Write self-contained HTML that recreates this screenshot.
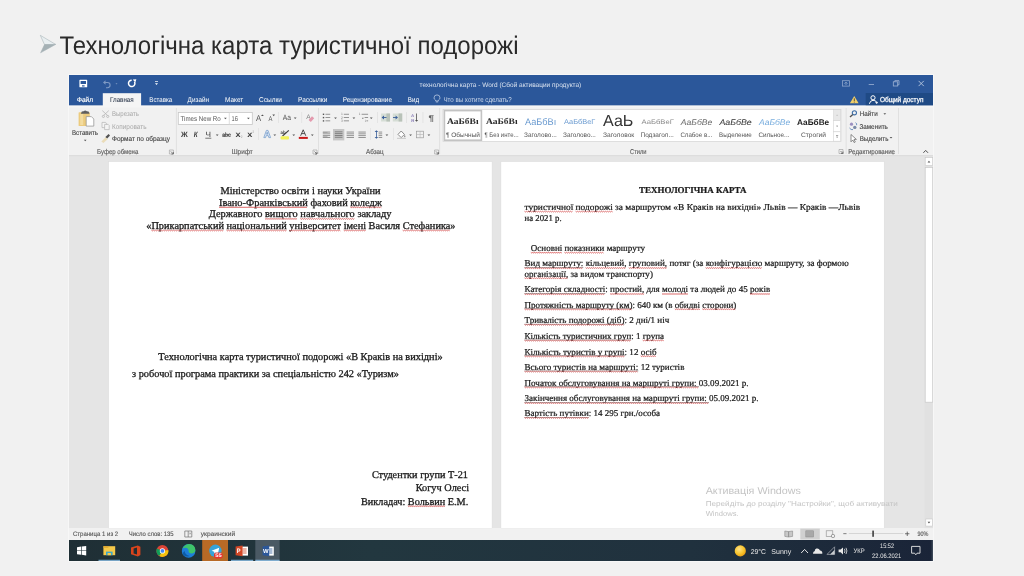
<!DOCTYPE html>
<html><head><meta charset="utf-8"><title>slide</title>
<style>html,body{margin:0;padding:0;width:1024px;height:576px;overflow:hidden;background:#efefef}svg{display:block;will-change:transform}</style>
</head><body><svg width="1024" height="576" viewBox="0 0 1024 576" text-rendering="geometricPrecision">
<rect x="0.00" y="0.00" width="1024.00" height="576.00" fill="#f1f1f1" />
<rect x="68.00" y="74.00" width="866.00" height="488.00" fill="#f7f7f7" />
<rect x="69.00" y="75.00" width="864.00" height="30.70" fill="#2b579a" />
<rect x="865.70" y="93.00" width="67.30" height="12.70" fill="#1f4a85" />
<rect x="69.00" y="105.70" width="864.00" height="49.50" fill="#f1f1f1" />
<rect x="69.00" y="105.70" width="864.00" height="1.80" fill="#f6f6f6" />
<rect x="102.80" y="93.20" width="38.30" height="13.80" fill="#f5f5f5" />
<rect x="69.00" y="155.20" width="864.00" height="373.10" fill="#e5e5e5" />
<rect x="69.00" y="155.20" width="864.00" height="1.00" fill="#dadada" />
<rect x="108.70" y="161.60" width="383.40" height="366.70" fill="#ffffff" stroke="#dcdcdc" stroke-width="0.5"/>
<rect x="500.90" y="161.60" width="383.30" height="366.70" fill="#ffffff" stroke="#dcdcdc" stroke-width="0.5"/>
<rect x="924.50" y="156.20" width="8.50" height="372.10" fill="#e1e1e1" />
<rect x="69.00" y="528.30" width="864.00" height="11.70" fill="#f1f1f1" />
<defs><linearGradient id="tb" x1="0" x2="1" y1="0" y2="0"><stop offset="0" stop-color="#1f2f35"/><stop offset="0.35" stop-color="#22373f"/><stop offset="0.72" stop-color="#20313e"/><stop offset="1" stop-color="#1a2438"/></linearGradient></defs>
<rect x="69.00" y="540.00" width="864.00" height="21.00" fill="url(#tb)" />
<path d="M40.3,35.3 L55.6,44.4 L44.5,44.6 Z" fill="#e9eff1" stroke="#a9b5b9" stroke-width="0.6"/><path d="M44.5,44.6 L55.6,44.4 L40.6,52.8 Z" fill="#a5b1b5" stroke="#a5b1b5" stroke-width="0.5"/>
<text x="59.40" y="53.90" font-size="25.50" fill="#2a2a2a" font-family="Liberation Sans" textLength="459.10" lengthAdjust="spacingAndGlyphs">Технологічна карта туристичної подорожі</text>
<text x="419.50" y="86.70" font-size="6.60" fill="#d9e2ef" font-family="Liberation Sans" textLength="161.75" lengthAdjust="spacingAndGlyphs">технологічна карта - Word (Сбой активации продукта)</text>
<text x="77.00" y="101.90" font-size="7.00" fill="#ffffff" font-family="Liberation Sans" textLength="16.00" lengthAdjust="spacingAndGlyphs" stroke="#ffffff" stroke-width="0.15">Файл</text>
<text x="110.00" y="101.90" font-size="7.00" fill="#3b4658" font-family="Liberation Sans" textLength="23.70" lengthAdjust="spacingAndGlyphs" stroke="#3b4658" stroke-width="0.1">Главная</text>
<text x="149.30" y="101.90" font-size="7.00" fill="#ffffff" font-family="Liberation Sans" textLength="22.89" lengthAdjust="spacingAndGlyphs">Вставка</text>
<text x="187.60" y="101.90" font-size="7.00" fill="#ffffff" font-family="Liberation Sans" textLength="21.40" lengthAdjust="spacingAndGlyphs">Дизайн</text>
<text x="225.10" y="101.90" font-size="7.00" fill="#ffffff" font-family="Liberation Sans" textLength="18.20" lengthAdjust="spacingAndGlyphs">Макет</text>
<text x="259.10" y="101.90" font-size="7.00" fill="#ffffff" font-family="Liberation Sans" textLength="22.90" lengthAdjust="spacingAndGlyphs">Ссылки</text>
<text x="298.00" y="101.90" font-size="7.00" fill="#ffffff" font-family="Liberation Sans" textLength="29.30" lengthAdjust="spacingAndGlyphs">Рассылки</text>
<text x="342.70" y="101.90" font-size="7.00" fill="#ffffff" font-family="Liberation Sans" textLength="49.30" lengthAdjust="spacingAndGlyphs">Рецензирование</text>
<text x="407.80" y="101.90" font-size="7.00" fill="#ffffff" font-family="Liberation Sans" textLength="11.20" lengthAdjust="spacingAndGlyphs">Вид</text>
<text x="443.40" y="101.90" font-size="7.00" fill="#c9d6ea" font-family="Liberation Sans" textLength="68.30" lengthAdjust="spacingAndGlyphs">Что вы хотите сделать?</text>
<text x="879.90" y="101.90" font-size="7.20" fill="#ffffff" font-family="Liberation Sans" textLength="43.50" lengthAdjust="spacingAndGlyphs" stroke="#ffffff" stroke-width="0.25">Общий доступ</text>
<text x="72.00" y="134.90" font-size="7.00" fill="#444444" font-family="Liberation Sans" textLength="26.00" lengthAdjust="spacingAndGlyphs" stroke="#444444" stroke-width="0.12">Вставить</text>
<text x="112.00" y="116.30" font-size="7.00" fill="#a8a8a8" font-family="Liberation Sans" textLength="26.80" lengthAdjust="spacingAndGlyphs">Вырезать</text>
<text x="112.00" y="128.60" font-size="7.00" fill="#a8a8a8" font-family="Liberation Sans" textLength="34.50" lengthAdjust="spacingAndGlyphs">Копировать</text>
<text x="112.00" y="141.00" font-size="7.00" fill="#444444" font-family="Liberation Sans" textLength="58.00" lengthAdjust="spacingAndGlyphs" stroke="#444444" stroke-width="0.12">Формат по образцу</text>
<text x="97.10" y="153.90" font-size="7.00" fill="#5e5e5e" font-family="Liberation Sans" textLength="41.19" lengthAdjust="spacingAndGlyphs" stroke="#5e5e5e" stroke-width="0.15">Буфер обмена</text>
<text x="231.70" y="153.90" font-size="7.00" fill="#5e5e5e" font-family="Liberation Sans" textLength="21.10" lengthAdjust="spacingAndGlyphs" stroke="#5e5e5e" stroke-width="0.15">Шрифт</text>
<text x="366.00" y="153.90" font-size="7.00" fill="#5e5e5e" font-family="Liberation Sans" textLength="17.75" lengthAdjust="spacingAndGlyphs" stroke="#5e5e5e" stroke-width="0.15">Абзац</text>
<text x="630.00" y="153.90" font-size="7.00" fill="#5e5e5e" font-family="Liberation Sans" textLength="16.50" lengthAdjust="spacingAndGlyphs" stroke="#5e5e5e" stroke-width="0.15">Стили</text>
<text x="848.30" y="153.90" font-size="7.00" fill="#5e5e5e" font-family="Liberation Sans" textLength="46.70" lengthAdjust="spacingAndGlyphs" stroke="#5e5e5e" stroke-width="0.15">Редактирование</text>
<text x="859.70" y="116.20" font-size="7.00" fill="#444444" font-family="Liberation Sans" textLength="18.00" lengthAdjust="spacingAndGlyphs" stroke="#444444" stroke-width="0.12">Найти</text>
<text x="859.40" y="128.80" font-size="7.00" fill="#444444" font-family="Liberation Sans" textLength="28.50" lengthAdjust="spacingAndGlyphs" stroke="#444444" stroke-width="0.12">Заменить</text>
<text x="859.70" y="141.00" font-size="7.00" fill="#444444" font-family="Liberation Sans" textLength="28.70" lengthAdjust="spacingAndGlyphs" stroke="#444444" stroke-width="0.12">Выделить</text>
<rect x="178.30" y="112.40" width="74.00" height="12.00" fill="#ffffff" stroke="#c6c6c6" stroke-width="0.8"/>
<line x1="229.3" y1="112.4" x2="229.3" y2="124.4" stroke="#d6d6d6" stroke-width="0.8"/>
<text x="180.50" y="120.50" font-size="7.00" fill="#555555" font-family="Liberation Sans" textLength="40.20" lengthAdjust="spacingAndGlyphs">Times New Ro</text>
<text x="231.60" y="120.50" font-size="7.00" fill="#555555" font-family="Liberation Sans" textLength="6.30" lengthAdjust="spacingAndGlyphs">16</text>
<text x="220.50" y="194.00" font-size="10.34" fill="#1a1a1a" font-family="Liberation Serif" textLength="160.00" lengthAdjust="spacingAndGlyphs" stroke="#1a1a1a" stroke-width="0.3">Міністерство освіти і науки України</text>
<text x="219.00" y="205.60" font-size="10.34" fill="#1a1a1a" font-family="Liberation Serif" textLength="162.94" lengthAdjust="spacingAndGlyphs" stroke="#1a1a1a" stroke-width="0.3">Івано-Франківський фаховий коледж</text>
<text x="208.75" y="217.20" font-size="10.34" fill="#1a1a1a" font-family="Liberation Serif" textLength="182.65" lengthAdjust="spacingAndGlyphs" stroke="#1a1a1a" stroke-width="0.3">Державного вищого навчального закладу</text>
<text x="146.25" y="228.80" font-size="10.34" fill="#1a1a1a" font-family="Liberation Serif" textLength="309.25" lengthAdjust="spacingAndGlyphs" stroke="#1a1a1a" stroke-width="0.3">«Прикарпатський національний університет імені Василя Стефаника»</text>
<text x="158.30" y="359.70" font-size="10.34" fill="#1a1a1a" font-family="Liberation Serif" textLength="284.40" lengthAdjust="spacingAndGlyphs" stroke="#1a1a1a" stroke-width="0.3">Технологічна карта туристичної подорожі «В Краків на вихідні»</text>
<text x="132.00" y="377.40" font-size="10.34" fill="#1a1a1a" font-family="Liberation Serif" textLength="267.00" lengthAdjust="spacingAndGlyphs" stroke="#1a1a1a" stroke-width="0.3">з робочої програма практики за спеціальністю 242 «Туризм»</text>
<text x="371.90" y="477.80" font-size="10.34" fill="#1a1a1a" font-family="Liberation Serif" textLength="96.00" lengthAdjust="spacingAndGlyphs" stroke="#1a1a1a" stroke-width="0.3">Студентки групи Т-21</text>
<text x="415.70" y="490.80" font-size="10.34" fill="#1a1a1a" font-family="Liberation Serif" textLength="53.30" lengthAdjust="spacingAndGlyphs" stroke="#1a1a1a" stroke-width="0.3">Когуч Олесі</text>
<text x="361.00" y="504.50" font-size="10.34" fill="#1a1a1a" font-family="Liberation Serif" textLength="107.30" lengthAdjust="spacingAndGlyphs" stroke="#1a1a1a" stroke-width="0.3">Викладач: Вольвин Е.М.</text>
<text x="639.00" y="193.00" font-size="9.00" fill="#1a1a1a" font-family="Liberation Serif" font-weight="bold" textLength="107.60" lengthAdjust="spacingAndGlyphs" stroke="#1a1a1a" stroke-width="0.22">ТЕХНОЛОГІЧНА КАРТА</text>
<text x="524.50" y="209.90" font-size="9.00" fill="#1a1a1a" font-family="Liberation Serif" textLength="335.80" lengthAdjust="spacingAndGlyphs" stroke="#1a1a1a" stroke-width="0.22">туристичної подорожі за маршрутом «В Краків на вихідні» Львів — Краків —Львів</text>
<text x="524.50" y="220.50" font-size="9.00" fill="#1a1a1a" font-family="Liberation Serif" textLength="37.10" lengthAdjust="spacingAndGlyphs" stroke="#1a1a1a" stroke-width="0.22">на 2021 р.</text>
<text x="530.80" y="251.00" font-size="9.00" fill="#1a1a1a" font-family="Liberation Serif" textLength="114.20" lengthAdjust="spacingAndGlyphs" stroke="#1a1a1a" stroke-width="0.22">Основні показники маршруту</text>
<text x="524.50" y="266.30" font-size="9.00" fill="#1a1a1a" font-family="Liberation Serif" textLength="324.20" lengthAdjust="spacingAndGlyphs" stroke="#1a1a1a" stroke-width="0.22">Вид маршруту: кільцевий, груповий, потяг (за конфігурацією маршруту, за формою</text>
<text x="524.50" y="276.50" font-size="9.00" fill="#1a1a1a" font-family="Liberation Serif" textLength="128.40" lengthAdjust="spacingAndGlyphs" stroke="#1a1a1a" stroke-width="0.22">організації, за видом транспорту)</text>
<text x="524.50" y="292.30" font-size="9.00" fill="#1a1a1a" font-family="Liberation Serif" textLength="245.70" lengthAdjust="spacingAndGlyphs" stroke="#1a1a1a" stroke-width="0.22">Категорія складності: простий, для молоді та людей до 45 років</text>
<text x="524.50" y="307.50" font-size="9.00" fill="#1a1a1a" font-family="Liberation Serif" textLength="211.80" lengthAdjust="spacingAndGlyphs" stroke="#1a1a1a" stroke-width="0.22">Протяжність маршруту (км): 640 км (в обидві сторони)</text>
<text x="524.50" y="322.90" font-size="9.00" fill="#1a1a1a" font-family="Liberation Serif" textLength="144.70" lengthAdjust="spacingAndGlyphs" stroke="#1a1a1a" stroke-width="0.22">Тривалість подорожі (діб): 2 дні/1 ніч</text>
<text x="524.50" y="338.70" font-size="9.00" fill="#1a1a1a" font-family="Liberation Serif" textLength="139.50" lengthAdjust="spacingAndGlyphs" stroke="#1a1a1a" stroke-width="0.22">Кількість туристичних груп: 1 група</text>
<text x="524.50" y="354.50" font-size="9.00" fill="#1a1a1a" font-family="Liberation Serif" textLength="132.10" lengthAdjust="spacingAndGlyphs" stroke="#1a1a1a" stroke-width="0.22">Кількість туристів у групі: 12 осіб</text>
<text x="524.50" y="369.70" font-size="9.00" fill="#1a1a1a" font-family="Liberation Serif" textLength="159.90" lengthAdjust="spacingAndGlyphs" stroke="#1a1a1a" stroke-width="0.22">Всього туристів на маршруті: 12 туристів</text>
<text x="524.50" y="385.50" font-size="9.00" fill="#1a1a1a" font-family="Liberation Serif" textLength="224.10" lengthAdjust="spacingAndGlyphs" stroke="#1a1a1a" stroke-width="0.22">Початок обслуговування на маршруті групи: 03.09.2021 р.</text>
<text x="524.50" y="401.20" font-size="9.00" fill="#1a1a1a" font-family="Liberation Serif" textLength="234.10" lengthAdjust="spacingAndGlyphs" stroke="#1a1a1a" stroke-width="0.22">Закінчення обслуговування на маршруті групи: 05.09.2021 р.</text>
<text x="524.50" y="416.00" font-size="9.00" fill="#1a1a1a" font-family="Liberation Serif" textLength="135.50" lengthAdjust="spacingAndGlyphs" stroke="#1a1a1a" stroke-width="0.22">Вартість путівки: 14 295 грн./особа</text>
<text x="705.70" y="494.40" font-size="10.00" fill="#c4c4c4" font-family="Liberation Sans" textLength="95.20" lengthAdjust="spacingAndGlyphs">Активація Windows</text>
<text x="705.70" y="506.10" font-size="7.20" fill="#c4c4c4" font-family="Liberation Sans" textLength="192.20" lengthAdjust="spacingAndGlyphs">Перейдіть до розділу &quot;Настройки&quot;, щоб активувати</text>
<text x="705.70" y="516.00" font-size="7.20" fill="#c4c4c4" font-family="Liberation Sans" textLength="32.90" lengthAdjust="spacingAndGlyphs">Windows.</text>
<text x="72.90" y="536.40" font-size="6.50" fill="#555555" font-family="Liberation Sans" textLength="45.30" lengthAdjust="spacingAndGlyphs" stroke="#555555" stroke-width="0.12">Страница 1 из 2</text>
<text x="128.80" y="536.40" font-size="6.50" fill="#555555" font-family="Liberation Sans" textLength="44.80" lengthAdjust="spacingAndGlyphs" stroke="#555555" stroke-width="0.12">Число слов: 135</text>
<text x="200.80" y="536.40" font-size="6.50" fill="#555555" font-family="Liberation Sans" textLength="34.30" lengthAdjust="spacingAndGlyphs" stroke="#555555" stroke-width="0.12">украинский</text>
<text x="917.50" y="536.40" font-size="6.50" fill="#555555" font-family="Liberation Sans" textLength="10.90" lengthAdjust="spacingAndGlyphs" stroke="#555555" stroke-width="0.12">90%</text>
<text x="750.80" y="553.80" font-size="7.00" fill="#e8e8e8" font-family="Liberation Sans" textLength="15.20" lengthAdjust="spacingAndGlyphs">29°C</text>
<text x="771.30" y="553.80" font-size="7.00" fill="#e8e8e8" font-family="Liberation Sans" textLength="19.90" lengthAdjust="spacingAndGlyphs">Sunny</text>
<text x="853.50" y="552.90" font-size="6.50" fill="#e8e8e8" font-family="Liberation Sans" textLength="11.20" lengthAdjust="spacingAndGlyphs">УКР</text>
<text x="880.10" y="548.30" font-size="6.50" fill="#e8e8e8" font-family="Liberation Sans" textLength="13.90" lengthAdjust="spacingAndGlyphs">15:52</text>
<text x="872.10" y="557.70" font-size="6.50" fill="#e8e8e8" font-family="Liberation Sans" textLength="29.10" lengthAdjust="spacingAndGlyphs">22.06.2021</text>
<rect x="79.4" y="79.8" width="7.8" height="7.5" rx="0.6" fill="#ffffff"/><rect x="80.6" y="81" width="5.4" height="3.0" fill="#2b579a"/><rect x="82" y="85.3" width="2.6" height="1.2" fill="#2b579a"/>
<path d="M104,82.5 L107.5,82.5 A2.6,2.6 0 0 1 107.5,87.7 L106,87.7" fill="none" stroke="#7f9ac4" stroke-width="1.1"/><path d="M103,82.5 L105.5,80.2 L105.5,84.8 Z" fill="#7f9ac4"/>
<path d="M115.5,83.3 L117.5,83.3 L116.5,84.5 Z" fill="#7f9ac4"/>
<path d="M131.7,80.2 A3.2,3.2 0 1 0 134.47,81.8" fill="none" stroke="#ffffff" stroke-width="1.5"/><path d="M132.8,79.4 L136.4,79.2 L135.3,82.6 Z" fill="#ffffff"/>
<rect x="155" y="81.2" width="3" height="0.7" fill="#ffffff"/><path d="M155,83.2 L158,83.2 L156.5,85 Z" fill="#ffffff"/>
<rect x="842.6" y="80.7" width="6.8" height="5.4" fill="none" stroke="#8ea6cc" stroke-width="0.8"/><path d="M844.4,83.6 L846,82.2 L847.6,83.6 M846,82.4 L846,85" fill="none" stroke="#8ea6cc" stroke-width="0.8"/>
<rect x="868.7" y="84" width="5.3" height="0.8" fill="#9db2d4"/>
<rect x="893.3" y="81.8" width="4.4" height="4.2" fill="none" stroke="#9db2d4" stroke-width="0.8"/><path d="M894.8,81.8 L894.8,80.6 L899,80.6 L899,84.8 L897.7,84.8" fill="none" stroke="#9db2d4" stroke-width="0.8"/>
<path d="M918.6,80.9 L923.8,86.1 M923.8,80.9 L918.6,86.1" stroke="#b9c8e0" stroke-width="0.9"/>
<path d="M854.25,96 L858.6,103.3 L849.9,103.3 Z" fill="#f0cf6a"/><rect x="853.85" y="98.3" width="0.8" height="2.8" fill="#333"/><rect x="853.85" y="101.7" width="0.8" height="0.8" fill="#333"/>
<circle cx="873" cy="97.8" r="2.1" fill="none" stroke="#ffffff" stroke-width="1"/><path d="M869.4,103.8 Q870,100.6 873,100.3 Q875.2,100.4 876.2,101.6" fill="none" stroke="#ffffff" stroke-width="1"/><path d="M875.3,102.6 L878,102.6 M876.65,101.3 L876.65,104" stroke="#ffffff" stroke-width="0.8"/>
<path d="M435.6,101 L435.6,100.2 Q433.8,99 434,97.9 A3,3 0 0 1 440,97.9 Q440.2,99 438.4,100.2 L438.4,101 Z" fill="none" stroke="#c9d6ea" stroke-width="0.7"/><rect x="435.8" y="101.6" width="2.4" height="0.7" fill="#c9d6ea"/>
<rect x="78.6" y="112.3" width="11.2" height="13.8" rx="0.6" fill="#eccb7e"/><rect x="80.2" y="114" width="3" height="11" fill="#f3dca0"/>
<path d="M80.9,113.8 L81.8,111.6 L83.6,111.2 Q85.2,109.6 86.8,111.2 L88.6,111.6 L89.5,113.8 Z" fill="#5f5f5f"/>
<path d="M86.2,116.6 L91.4,116.6 L93.8,119 L93.8,126.1 L86.2,126.1 Z" fill="#ffffff" stroke="#8c8c8c" stroke-width="0.7"/>
<path d="M83.9,139.8 L86.5,139.8 L85.2,141.2 Z" fill="#505050"/>
<g fill="none" stroke="#b5b5b5" stroke-width="0.8"><path d="M102.3,110.6 L107.6,115.6 M108.8,110.6 L103.5,115.6"/><circle cx="103.4" cy="116.4" r="1.1"/><circle cx="107.7" cy="116.4" r="1.1"/></g>
<g fill="#f4f4f4" stroke="#b5b5b5" stroke-width="0.7"><path d="M102,122.4 L105.6,122.4 L106.4,123.2 L106.4,127.6 L102,127.6 Z"/><path d="M104.6,124.4 L108.2,124.4 L109.2,125.4 L109.2,129.6 L104.6,129.6 Z"/></g>
<path d="M101.4,141.4 L105.6,137.2 L107.6,139.2 L103.4,143 Z" fill="#eadcb8"/><path d="M105.4,137 L108.6,134 L110,135.4 L107.2,138.6 Z" fill="#505050"/>
<path d="M169.4,150 L173.4,150 L173.4,154 L169.4,154 Z" fill="none" stroke="#9a9a9a" stroke-width="0.6"/><path d="M170.9,151.5 L173.4,154 L173.4,152 M173.4,154 L171.4,154" fill="none" stroke="#666" stroke-width="0.8"/>
<path d="M313,150 L317,150 L317,154 L313,154 Z" fill="none" stroke="#9a9a9a" stroke-width="0.6"/><path d="M314.5,151.5 L317,154 L317,152 M317,154 L315,154" fill="none" stroke="#666" stroke-width="0.8"/>
<path d="M434.6,150 L438.6,150 L438.6,154 L434.6,154 Z" fill="none" stroke="#9a9a9a" stroke-width="0.6"/><path d="M436.1,151.5 L438.6,154 L438.6,152 M438.6,154 L436.6,154" fill="none" stroke="#666" stroke-width="0.8"/>
<path d="M839,149.5 L843,149.5 L843,153.5 L839,153.5 Z" fill="none" stroke="#9a9a9a" stroke-width="0.6"/><path d="M840.5,151.0 L843,153.5 L843,151.5 M843,153.5 L841,153.5" fill="none" stroke="#666" stroke-width="0.8"/>
<rect x="175.9" y="108" width="0.8" height="46" fill="#dcdcdc"/>
<rect x="318.1" y="108" width="0.8" height="46" fill="#dcdcdc"/>
<rect x="439.3" y="108" width="0.8" height="46" fill="#dcdcdc"/>
<rect x="845.7" y="108" width="0.8" height="46" fill="#dcdcdc"/>
<rect x="898" y="108" width="0.8" height="46" fill="#dcdcdc"/>
<path d="M224.03,117.67 L226.78,117.67 L225.40,119.17 Z" fill="#555555"/>
<path d="M247.03,117.67 L249.78,117.67 L248.40,119.17 Z" fill="#555555"/>
<text x="255.90" y="120.80" font-size="8.50" fill="#505050" font-family="Liberation Sans" textLength="5.10" lengthAdjust="spacingAndGlyphs">A</text>
<path d="M261,116 L262.4,114.4 L263.8,116 Z" fill="#505050"/>
<text x="268.40" y="120.80" font-size="7.00" fill="#505050" font-family="Liberation Sans" textLength="3.90" lengthAdjust="spacingAndGlyphs">A</text>
<path d="M272.4,114.6 L275,114.6 L273.7,116.2 Z" fill="#505050"/>
<rect x="278.3" y="112" width="0.7" height="11" fill="#dedede"/>
<text x="282.80" y="120.30" font-size="7.80" fill="#505050" font-family="Liberation Sans" textLength="8.19" lengthAdjust="spacingAndGlyphs">Aa</text>
<path d="M293.82,117.38 L296.57,117.38 L295.20,118.88 Z" fill="#555555"/>
<rect x="301.4" y="112" width="0.7" height="11" fill="#dedede"/>
<text x="306.20" y="118.60" font-size="6.50" fill="#888888" font-family="Liberation Sans" textLength="4.40" lengthAdjust="spacingAndGlyphs">A</text>
<path d="M308.6,120 L312,116.2 L314.2,118.2 L310.8,122 Z" fill="#e49aae"/>
<text x="181.12" y="136.90" font-size="7.80" fill="#404040" font-family="Liberation Sans" font-weight="bold" textLength="6.74" lengthAdjust="spacingAndGlyphs">Ж</text>
<text x="193.75" y="136.90" font-size="7.80" fill="#404040" font-family="Liberation Sans" font-weight="bold" font-style="italic" textLength="3.89" lengthAdjust="spacingAndGlyphs">К</text>
<text x="205.50" y="136.90" font-size="7.80" fill="#404040" font-family="Liberation Sans" textLength="5.50" lengthAdjust="spacingAndGlyphs">Ч</text>
<rect x="205.3" y="137.8" width="6" height="0.7" fill="#404040"/>
<path d="M215.82,134.38 L218.57,134.38 L217.20,135.88 Z" fill="#555555"/>
<text x="222.30" y="136.90" font-size="6.50" fill="#404040" font-family="Liberation Sans" font-weight="bold" textLength="8.60" lengthAdjust="spacingAndGlyphs">abc</text>
<rect x="222.2" y="134.6" width="8.8" height="0.6" fill="#404040"/>
<text x="235.50" y="136.90" font-size="8.00" fill="#404040" font-family="Liberation Sans" font-weight="bold" textLength="5.10" lengthAdjust="spacingAndGlyphs">x</text>
<text x="241.00" y="138.00" font-size="3.50" fill="#888" font-family="Liberation Sans" textLength="1.40" lengthAdjust="spacingAndGlyphs">2</text>
<text x="247.30" y="136.90" font-size="8.00" fill="#404040" font-family="Liberation Sans" font-weight="bold" textLength="5.10" lengthAdjust="spacingAndGlyphs">x</text>
<text x="252.60" y="132.50" font-size="3.50" fill="#888" font-family="Liberation Sans" textLength="1.40" lengthAdjust="spacingAndGlyphs">2</text>
<rect x="258.3" y="128" width="0.7" height="12" fill="#e0e0e0"/>
<path d="M263.8,137.6 L266.4,130.4 L268,130.4 L270.6,137.6 L268.8,137.6 L268.2,135.6 L266.2,135.6 L265.6,137.6 Z M266.6,134.2 L267.8,134.2 L267.2,132.2 Z" fill="#dbe6f3" stroke="#6d97c9" stroke-width="0.7"/>
<path d="M273.43,134.38 L276.18,134.38 L274.80,135.88 Z" fill="#555555"/>
<text x="280.50" y="133.80" font-size="4.80" fill="#404040" font-family="Liberation Sans" font-weight="bold" textLength="5.00" lengthAdjust="spacingAndGlyphs">ab</text>
<path d="M282.5,136 L288.8,130.4" stroke="#404040" stroke-width="1.2"/>
<rect x="280.6" y="136.2" width="8.4" height="3.2" rx="1" fill="#f2f25a"/>
<path d="M292.38,134.38 L295.12,134.38 L293.75,135.88 Z" fill="#555555"/>
<path d="M300.6,135.8 L303.2,129.8 L305.8,135.8 M301.6,133.6 L304.8,133.6" fill="none" stroke="#404040" stroke-width="0.9"/>
<rect x="298.8" y="136.9" width="9" height="2" fill="#c81a1a"/>
<path d="M310.93,134.38 L313.68,134.38 L312.30,135.88 Z" fill="#555555"/>
<rect x="322.8" y="113.60000000000001" width="1.4" height="1.4" fill="#555"/>
<rect x="322.8" y="116.9" width="1.4" height="1.4" fill="#555"/>
<rect x="322.8" y="120.2" width="1.4" height="1.4" fill="#555"/>
<rect x="325.5" y="113.8" width="4.70" height="0.9" fill="#8a8a8a"/>
<rect x="325.5" y="117.1" width="4.70" height="0.9" fill="#8a8a8a"/>
<rect x="325.5" y="120.4" width="4.70" height="0.9" fill="#8a8a8a"/>
<path d="M334.12,117.38 L336.88,117.38 L335.50,118.88 Z" fill="#555555"/>
<text x="341.20" y="115.40" font-size="3.40" fill="#555" font-family="Liberation Sans" textLength="1.40" lengthAdjust="spacingAndGlyphs">1</text>
<text x="341.20" y="118.70" font-size="3.40" fill="#555" font-family="Liberation Sans" textLength="1.40" lengthAdjust="spacingAndGlyphs">2</text>
<text x="341.20" y="122.00" font-size="3.40" fill="#555" font-family="Liberation Sans" textLength="1.40" lengthAdjust="spacingAndGlyphs">3</text>
<rect x="343.8" y="113.8" width="5.20" height="0.9" fill="#8a8a8a"/>
<rect x="343.8" y="117.1" width="5.20" height="0.9" fill="#8a8a8a"/>
<rect x="343.8" y="120.4" width="5.20" height="0.9" fill="#8a8a8a"/>
<path d="M352.52,117.38 L355.27,117.38 L353.90,118.88 Z" fill="#555555"/>
<text x="359.10" y="115.40" font-size="3.40" fill="#555" font-family="Liberation Sans" textLength="1.30" lengthAdjust="spacingAndGlyphs">1</text>
<rect x="361.6" y="113.8" width="6.50" height="0.9" fill="#8a8a8a"/>
<text x="362.00" y="118.70" font-size="3.40" fill="#555" font-family="Liberation Sans" textLength="1.40" lengthAdjust="spacingAndGlyphs">a</text>
<rect x="364.6" y="117.1" width="3.50" height="0.9" fill="#8a8a8a"/>
<text x="364.80" y="122.00" font-size="3.40" fill="#555" font-family="Liberation Sans" textLength="0.80" lengthAdjust="spacingAndGlyphs">i</text>
<rect x="366.4" y="120.4" width="1.70" height="0.9" fill="#8a8a8a"/>
<path d="M369.88,117.38 L372.62,117.38 L371.25,118.88 Z" fill="#555555"/>
<rect x="377.2" y="112" width="0.7" height="11" fill="#dedede"/>
<rect x="381.1" y="113.5" width="9" height="8" fill="#d5ddd5"/><rect x="386.4" y="113.5" width="3.6" height="8" fill="#b8c2b8"/>
<path d="M381.6,117.5 L384,115.6 L384,119.4 Z" fill="#3a5f9a"/><rect x="383.5" y="117.1" width="3" height="0.9" fill="#3a5f9a"/>
<rect x="392.8" y="113.5" width="9.4" height="8" fill="#d5ddd5"/><rect x="398.6" y="113.5" width="3.6" height="8" fill="#b8c2b8"/>
<path d="M398,117.5 L395.6,115.6 L395.6,119.4 Z" fill="#3a5f9a"/><rect x="393" y="117.1" width="3" height="0.9" fill="#3a5f9a"/>
<rect x="406.2" y="112" width="0.7" height="11" fill="#dedede"/>
<text x="411.10" y="117.00" font-size="4.20" fill="#8a7fb8" font-family="Liberation Sans" font-weight="bold" textLength="3.20" lengthAdjust="spacingAndGlyphs">A</text>
<text x="411.10" y="121.50" font-size="4.20" fill="#8a7fb8" font-family="Liberation Sans" font-weight="bold" textLength="3.20" lengthAdjust="spacingAndGlyphs">Я</text>
<rect x="416.2" y="113.5" width="0.8" height="7" fill="#505050"/><path d="M415,120 L418.2,120 L416.6,121.8 Z" fill="#505050"/>
<rect x="422.6" y="112" width="0.7" height="11" fill="#dedede"/>
<text x="428.50" y="121.00" font-size="8.50" fill="#606060" font-family="Liberation Sans" font-weight="bold" textLength="5.60" lengthAdjust="spacingAndGlyphs">¶</text>
<rect x="322.8" y="131.6" width="7.40" height="0.9" fill="#8a8a8a"/>
<rect x="322.8" y="133.4" width="7.40" height="0.9" fill="#8a8a8a"/>
<rect x="322.8" y="135.2" width="7.40" height="0.9" fill="#8a8a8a"/>
<rect x="322.8" y="137" width="7.40" height="0.9" fill="#8a8a8a"/>
<rect x="322.8" y="132.5" width="4.70" height="0.5" fill="#8a8a8a"/>
<rect x="322.8" y="136.1" width="4.70" height="0.5" fill="#8a8a8a"/>
<rect x="333.00" y="129.00" width="11.30" height="11.40" fill="#c6c6c6" />
<rect x="334.8" y="131.4" width="7.70" height="0.9" fill="#7a7a7a"/>
<rect x="334.8" y="133.2" width="7.70" height="0.9" fill="#7a7a7a"/>
<rect x="334.8" y="135" width="7.70" height="0.9" fill="#7a7a7a"/>
<rect x="334.8" y="136.8" width="7.70" height="0.9" fill="#7a7a7a"/>
<rect x="346.6" y="131.6" width="7.40" height="0.9" fill="#8a8a8a"/>
<rect x="346.6" y="133.4" width="7.40" height="0.9" fill="#8a8a8a"/>
<rect x="346.6" y="135.2" width="7.40" height="0.9" fill="#8a8a8a"/>
<rect x="346.6" y="137" width="7.40" height="0.9" fill="#8a8a8a"/>
<rect x="358.4" y="131.6" width="7.40" height="0.9" fill="#8a8a8a"/>
<rect x="358.4" y="133.4" width="7.40" height="0.9" fill="#8a8a8a"/>
<rect x="358.4" y="135.2" width="7.40" height="0.9" fill="#8a8a8a"/>
<rect x="358.4" y="137" width="7.40" height="0.9" fill="#8a8a8a"/>
<rect x="370.3" y="128" width="0.7" height="12" fill="#e0e0e0"/>
<path d="M376.4,130.2 L378.2,132 L374.6,132 Z M376.4,138.8 L378.2,137 L374.6,137 Z" fill="#3a5f9a"/><rect x="376" y="131.5" width="0.8" height="6" fill="#3a5f9a"/>
<rect x="378.6" y="131.6" width="3.60" height="0.9" fill="#8a8a8a"/>
<rect x="378.6" y="133.4" width="3.60" height="0.9" fill="#8a8a8a"/>
<rect x="378.6" y="135.2" width="3.60" height="0.9" fill="#8a8a8a"/>
<rect x="378.6" y="137" width="3.60" height="0.9" fill="#8a8a8a"/>
<path d="M385.52,134.38 L388.27,134.38 L386.90,135.88 Z" fill="#555555"/>
<rect x="393.2" y="128" width="0.7" height="12" fill="#e0e0e0"/>
<path d="M398,134.4 L401.2,131 L404.4,134.4 L401.2,137.6 Z" fill="#ffffff" stroke="#707070" stroke-width="0.8"/><path d="M404.8,134.8 Q406,136.8 404.8,137.6 Q403.6,136.8 404.8,134.8 Z" fill="#707070"/>
<rect x="397" y="137.8" width="9" height="1.2" fill="#cfcfcf"/>
<path d="M409.23,134.38 L411.98,134.38 L410.60,135.88 Z" fill="#555555"/>
<rect x="416.6" y="131.2" width="7" height="6.6" fill="none" stroke="#9a9a9a" stroke-width="0.7"/><path d="M420.1,131.2 L420.1,137.8 M416.6,134.5 L423.6,134.5" stroke="#b5b5b5" stroke-width="0.6"/>
<path d="M427.52,134.38 L430.27,134.38 L428.90,135.88 Z" fill="#555555"/>
<rect x="443.00" y="109.40" width="398.00" height="32.00" fill="#ffffff" stroke="#d4d4d4" stroke-width="0.7"/>
<rect x="444.40" y="110.60" width="37.00" height="29.60" fill="#ffffff" stroke="#c3c3c3" stroke-width="1.6"/>
<text x="447.00" y="123.90" font-size="8.60" fill="#2a2a2a" font-family="Liberation Serif" font-weight="bold" textLength="31.60" lengthAdjust="spacingAndGlyphs">АаБбВı</text>
<text x="445.90" y="136.80" font-size="6.50" fill="#555" font-family="Liberation Sans" textLength="34.10" lengthAdjust="spacingAndGlyphs">¶ Обычный</text>
<text x="485.90" y="123.90" font-size="8.60" fill="#2a2a2a" font-family="Liberation Serif" font-weight="bold" textLength="31.70" lengthAdjust="spacingAndGlyphs">АаБбВı</text>
<text x="484.40" y="136.80" font-size="6.50" fill="#555" font-family="Liberation Sans" textLength="34.20" lengthAdjust="spacingAndGlyphs">¶ Без инте...</text>
<text x="525.00" y="125.20" font-size="9.60" fill="#6b9bd0" font-family="Liberation Sans" textLength="31.20" lengthAdjust="spacingAndGlyphs">АаБбВı</text>
<text x="524.00" y="136.80" font-size="6.50" fill="#555" font-family="Liberation Sans" textLength="32.80" lengthAdjust="spacingAndGlyphs">Заголово...</text>
<text x="564.00" y="124.10" font-size="7.00" fill="#6b9bd0" font-family="Liberation Sans" textLength="31.30" lengthAdjust="spacingAndGlyphs">АаБбВеГ</text>
<text x="563.00" y="136.80" font-size="6.50" fill="#555" font-family="Liberation Sans" textLength="32.90" lengthAdjust="spacingAndGlyphs">Заголово...</text>
<text x="603.00" y="125.50" font-size="16.00" fill="#333333" font-family="Liberation Sans" textLength="30.39" lengthAdjust="spacingAndGlyphs">АаЬ</text>
<text x="603.00" y="136.80" font-size="6.50" fill="#555" font-family="Liberation Sans" textLength="31.26" lengthAdjust="spacingAndGlyphs">Заголовок</text>
<text x="641.50" y="124.10" font-size="6.60" fill="#8a8a8a" font-family="Liberation Sans" textLength="32.30" lengthAdjust="spacingAndGlyphs">АаБбВеГ</text>
<text x="640.50" y="136.80" font-size="6.50" fill="#555" font-family="Liberation Sans" textLength="33.30" lengthAdjust="spacingAndGlyphs">Подзагол...</text>
<text x="680.83" y="124.60" font-size="8.20" fill="#6a6a6a" font-family="Liberation Sans" font-style="italic" textLength="31.47" lengthAdjust="spacingAndGlyphs">АаБбВе</text>
<text x="680.40" y="136.80" font-size="6.50" fill="#555" font-family="Liberation Sans" textLength="31.90" lengthAdjust="spacingAndGlyphs">Слабое в...</text>
<text x="719.44" y="124.60" font-size="8.20" fill="#2f2f2f" font-family="Liberation Sans" font-style="italic" textLength="32.36" lengthAdjust="spacingAndGlyphs">АаБбВе</text>
<text x="719.00" y="136.80" font-size="6.50" fill="#555" font-family="Liberation Sans" textLength="32.80" lengthAdjust="spacingAndGlyphs">Выделение</text>
<text x="758.93" y="124.60" font-size="8.20" fill="#7aaede" font-family="Liberation Sans" font-style="italic" textLength="31.47" lengthAdjust="spacingAndGlyphs">АаБбВе</text>
<text x="758.50" y="136.80" font-size="6.50" fill="#555" font-family="Liberation Sans" textLength="30.90" lengthAdjust="spacingAndGlyphs">Сильное...</text>
<text x="797.00" y="124.60" font-size="8.20" fill="#1e1e1e" font-family="Liberation Sans" font-weight="bold" textLength="32.20" lengthAdjust="spacingAndGlyphs">АаБбВе</text>
<text x="801.00" y="136.80" font-size="6.50" fill="#555" font-family="Liberation Sans" textLength="25.00" lengthAdjust="spacingAndGlyphs">Строгий</text>
<rect x="833.60" y="109.60" width="7.00" height="11.10" fill="#e8e8e8" stroke="#d4d4d4" stroke-width="0.6"/>
<rect x="833.60" y="120.70" width="7.00" height="11.10" fill="#ffffff" stroke="#d4d4d4" stroke-width="0.6"/>
<rect x="833.60" y="131.80" width="7.00" height="9.40" fill="#ffffff" stroke="#d4d4d4" stroke-width="0.6"/>
<path d="M836,115.8 L838.2,115.8 L837.1,114.6 Z" fill="#c0c0c0"/>
<path d="M836.11,125.75 L838.09,125.75 L837.10,126.83 Z" fill="#505050"/>
<rect x="836" y="135.2" width="2.2" height="0.5" fill="#505050"/>
<path d="M836.11,136.75 L838.09,136.75 L837.10,137.83 Z" fill="#505050"/>
<circle cx="854.4" cy="112.8" r="2.1" fill="none" stroke="#3f6fa8" stroke-width="1.1"/><path d="M852.8,114.4 L850,117" stroke="#505050" stroke-width="1.3"/>
<path d="M883.42,113.17 L886.17,113.17 L884.80,114.67 Z" fill="#555555"/>
<circle cx="851.5" cy="124.2" r="1.6" fill="#9a8fc0"/><circle cx="854.8" cy="127.4" r="1.7" fill="#7a8aa8"/><path d="M849.5,128 Q851,130.2 853,129.6" fill="none" stroke="#4a77b0" stroke-width="0.8"/><path d="M855.6,122.6 Q857.2,123.8 856.6,125.2" fill="none" stroke="#4a77b0" stroke-width="0.8"/>
<path d="M851,134.5 L851,141.8 L852.8,140 L854.2,142.6 L855.3,142 L854,139.4 L856.4,139.4 Z" fill="#ffffff" stroke="#606060" stroke-width="0.7"/>
<path d="M889.62,136.97 L892.38,136.97 L891.00,138.47 Z" fill="#555555"/>
<path d="M923.4,152.8 L925.7,150.4 L928,152.8" fill="none" stroke="#505050" stroke-width="1"/>
<polyline points="219.00,206.95 220.00,207.65 221.00,206.95 222.00,207.65 223.00,206.95 224.00,207.65 225.00,206.95 226.00,207.65 227.00,206.95 228.00,207.65 229.00,206.95 230.00,207.65 231.00,206.95 232.00,207.65 233.00,206.95 234.00,207.65 235.00,206.95 236.00,207.65 237.00,206.95 238.00,207.65 239.00,206.95 240.00,207.65 241.00,206.95 242.00,207.65 243.00,206.95 244.00,207.65 245.00,206.95 246.00,207.65 247.00,206.95 248.00,207.65 249.00,206.95 250.00,207.65 251.00,206.95 252.00,207.65 253.00,206.95 254.00,207.65 255.00,206.95 256.00,207.65 257.00,206.95 258.00,207.65 259.00,206.95 260.00,207.65 261.00,206.95 262.00,207.65 263.00,206.95 264.00,207.65 265.00,206.95 266.00,207.65 267.00,206.95 268.00,207.65 269.00,206.95 270.00,207.65 271.00,206.95 272.00,207.65 273.00,206.95 274.00,207.65 275.00,206.95 276.00,207.65 277.00,206.95 278.00,207.65 279.00,206.95 280.00,207.65 281.00,206.95 282.00,207.65 283.00,206.95 284.00,207.65 285.00,206.95 286.00,207.65 287.00,206.95 288.00,207.65 289.00,206.95 290.00,207.65 291.00,206.95 292.00,207.65 293.00,206.95 294.00,207.65 295.00,206.95 296.00,207.65 297.00,206.95 298.00,207.65 299.00,206.95 300.00,207.65 301.00,206.95 302.00,207.65 303.00,206.95 304.00,207.65 305.00,206.95 306.00,207.65 307.00,206.95" fill="none" stroke="#d65050" stroke-width="0.85"/>
<polyline points="350.29,206.95 351.29,207.65 352.29,206.95 353.29,207.65 354.29,206.95 355.29,207.65 356.29,206.95 357.29,207.65 358.29,206.95 359.29,207.65 360.29,206.95 361.29,207.65 362.29,206.95 363.29,207.65 364.29,206.95 365.29,207.65 366.29,206.95 367.29,207.65 368.29,206.95 369.29,207.65 370.29,206.95 371.29,207.65 372.29,206.95 373.29,207.65 374.29,206.95 375.29,207.65 376.29,206.95 377.29,207.65 378.29,206.95 379.29,207.65 380.29,206.95 381.29,207.65" fill="none" stroke="#d65050" stroke-width="0.85"/>
<polyline points="264.95,218.55 265.95,219.25 266.95,218.55 267.95,219.25 268.95,218.55 269.95,219.25 270.95,218.55 271.95,219.25 272.95,218.55 273.95,219.25 274.95,218.55 275.95,219.25 276.95,218.55 277.95,219.25 278.95,218.55 279.95,219.25 280.95,218.55 281.95,219.25 282.95,218.55 283.95,219.25 284.95,218.55 285.95,219.25 286.95,218.55 287.95,219.25 288.95,218.55 289.95,219.25 290.95,218.55 291.95,219.25 292.95,218.55 293.95,219.25 294.95,218.55 295.95,219.25 296.95,218.55" fill="none" stroke="#d65050" stroke-width="0.85"/>
<polyline points="300.37,218.55 301.37,219.25 302.37,218.55 303.37,219.25 304.37,218.55 305.37,219.25 306.37,218.55 307.37,219.25 308.37,218.55 309.37,219.25 310.37,218.55 311.37,219.25 312.37,218.55 313.37,219.25 314.37,218.55 315.37,219.25 316.37,218.55 317.37,219.25 318.37,218.55 319.37,219.25 320.37,218.55 321.37,219.25 322.37,218.55 323.37,219.25 324.37,218.55 325.37,219.25 326.37,218.55 327.37,219.25 328.37,218.55 329.37,219.25 330.37,218.55 331.37,219.25 332.37,218.55 333.37,219.25 334.37,218.55 335.37,219.25 336.37,218.55 337.37,219.25 338.37,218.55 339.37,219.25 340.37,218.55 341.37,219.25 342.37,218.55 343.37,219.25 344.37,218.55 345.37,219.25 346.37,218.55 347.37,219.25 348.37,218.55 349.37,219.25 350.37,218.55 351.37,219.25 352.37,218.55 353.37,219.25 354.37,218.55" fill="none" stroke="#d65050" stroke-width="0.85"/>
<polyline points="151.41,230.15 152.41,230.85 153.41,230.15 154.41,230.85 155.41,230.15 156.41,230.85 157.41,230.15 158.41,230.85 159.41,230.15 160.41,230.85 161.41,230.15 162.41,230.85 163.41,230.15 164.41,230.85 165.41,230.15 166.41,230.85 167.41,230.15 168.41,230.85 169.41,230.15 170.41,230.85 171.41,230.15 172.41,230.85 173.41,230.15 174.41,230.85 175.41,230.15 176.41,230.85 177.41,230.15 178.41,230.85 179.41,230.15 180.41,230.85 181.41,230.15 182.41,230.85 183.41,230.15 184.41,230.85 185.41,230.15 186.41,230.85 187.41,230.15 188.41,230.85 189.41,230.15 190.41,230.85 191.41,230.15 192.41,230.85 193.41,230.15 194.41,230.85 195.41,230.15 196.41,230.85 197.41,230.15 198.41,230.85 199.41,230.15 200.41,230.85 201.41,230.15 202.41,230.85 203.41,230.15 204.41,230.85 205.41,230.15 206.41,230.85 207.41,230.15 208.41,230.85 209.41,230.15 210.41,230.85 211.41,230.15 212.41,230.85 213.41,230.15 214.41,230.85 215.41,230.15 216.41,230.85 217.41,230.15 218.41,230.85 219.41,230.15 220.41,230.85 221.41,230.15 222.41,230.85 223.41,230.15" fill="none" stroke="#d65050" stroke-width="0.85"/>
<polyline points="226.51,230.15 227.51,230.85 228.51,230.15 229.51,230.85 230.51,230.15 231.51,230.85 232.51,230.15 233.51,230.85 234.51,230.15 235.51,230.85 236.51,230.15 237.51,230.85 238.51,230.15 239.51,230.85 240.51,230.15 241.51,230.85 242.51,230.15 243.51,230.85 244.51,230.15 245.51,230.85 246.51,230.15 247.51,230.85 248.51,230.15 249.51,230.85 250.51,230.15 251.51,230.85 252.51,230.15 253.51,230.85 254.51,230.15 255.51,230.85 256.51,230.15 257.51,230.85 258.51,230.15 259.51,230.85 260.51,230.15 261.51,230.85 262.51,230.15 263.51,230.85 264.51,230.15 265.51,230.85 266.51,230.15 267.51,230.85 268.51,230.15 269.51,230.85 270.51,230.15 271.51,230.85 272.51,230.15 273.51,230.85 274.51,230.15 275.51,230.85 276.51,230.15 277.51,230.85 278.51,230.15 279.51,230.85 280.51,230.15 281.51,230.85 282.51,230.15 283.51,230.85 284.51,230.15 285.51,230.85 286.51,230.15" fill="none" stroke="#d65050" stroke-width="0.85"/>
<polyline points="289.33,230.15 290.33,230.85 291.33,230.15 292.33,230.85 293.33,230.15 294.33,230.85 295.33,230.15 296.33,230.85 297.33,230.15 298.33,230.85 299.33,230.15 300.33,230.85 301.33,230.15 302.33,230.85 303.33,230.15 304.33,230.85 305.33,230.15 306.33,230.85 307.33,230.15 308.33,230.85 309.33,230.15 310.33,230.85 311.33,230.15 312.33,230.85 313.33,230.15 314.33,230.85 315.33,230.15 316.33,230.85 317.33,230.15 318.33,230.85 319.33,230.15 320.33,230.85 321.33,230.15 322.33,230.85 323.33,230.15 324.33,230.85 325.33,230.15 326.33,230.85 327.33,230.15 328.33,230.85 329.33,230.15 330.33,230.85 331.33,230.15 332.33,230.85 333.33,230.15 334.33,230.85 335.33,230.15 336.33,230.85 337.33,230.15 338.33,230.85 339.33,230.15 340.33,230.85" fill="none" stroke="#d65050" stroke-width="0.85"/>
<polyline points="343.69,230.15 344.69,230.85 345.69,230.15 346.69,230.85 347.69,230.15 348.69,230.85 349.69,230.15 350.69,230.85 351.69,230.15 352.69,230.85 353.69,230.15 354.69,230.85 355.69,230.15 356.69,230.85 357.69,230.15 358.69,230.85 359.69,230.15 360.69,230.85 361.69,230.15 362.69,230.85 363.69,230.15 364.69,230.85 365.69,230.15" fill="none" stroke="#d65050" stroke-width="0.85"/>
<polyline points="402.65,230.15 403.65,230.85 404.65,230.15 405.65,230.85 406.65,230.15 407.65,230.85 408.65,230.15 409.65,230.85 410.65,230.15 411.65,230.85 412.65,230.15 413.65,230.85 414.65,230.15 415.65,230.85 416.65,230.15 417.65,230.85 418.65,230.15 419.65,230.85 420.65,230.15 421.65,230.85 422.65,230.15 423.65,230.85 424.65,230.15 425.65,230.85 426.65,230.15 427.65,230.85 428.65,230.15 429.65,230.85 430.65,230.15 431.65,230.85 432.65,230.15 433.65,230.85 434.65,230.15 435.65,230.85 436.65,230.15 437.65,230.85 438.65,230.15 439.65,230.85 440.65,230.15 441.65,230.85 442.65,230.15 443.65,230.85 444.65,230.15 445.65,230.85 446.65,230.15 447.65,230.85 448.65,230.15 449.65,230.85" fill="none" stroke="#d65050" stroke-width="0.85"/>
<polyline points="407.85,505.85 408.85,506.55 409.85,505.85 410.85,506.55 411.85,505.85 412.85,506.55 413.85,505.85 414.85,506.55 415.85,505.85 416.85,506.55 417.85,505.85 418.85,506.55 419.85,505.85 420.85,506.55 421.85,505.85 422.85,506.55 423.85,505.85 424.85,506.55 425.85,505.85 426.85,506.55 427.85,505.85 428.85,506.55 429.85,505.85 430.85,506.55 431.85,505.85 432.85,506.55 433.85,505.85 434.85,506.55 435.85,505.85 436.85,506.55 437.85,505.85 438.85,506.55 439.85,505.85 440.85,506.55 441.85,505.85 442.85,506.55 443.85,505.85 444.85,506.55" fill="none" stroke="#d65050" stroke-width="0.85"/>
<polyline points="524.50,211.25 525.50,211.95 526.50,211.25 527.50,211.95 528.50,211.25 529.50,211.95 530.50,211.25 531.50,211.95 532.50,211.25 533.50,211.95 534.50,211.25 535.50,211.95 536.50,211.25 537.50,211.95 538.50,211.25 539.50,211.95 540.50,211.25 541.50,211.95 542.50,211.25 543.50,211.95 544.50,211.25 545.50,211.95 546.50,211.25 547.50,211.95 548.50,211.25 549.50,211.95 550.50,211.25 551.50,211.95 552.50,211.25 553.50,211.95 554.50,211.25 555.50,211.95 556.50,211.25 557.50,211.95 558.50,211.25 559.50,211.95 560.50,211.25 561.50,211.95 562.50,211.25 563.50,211.95 564.50,211.25 565.50,211.95 566.50,211.25 567.50,211.95 568.50,211.25 569.50,211.95 570.50,211.25 571.50,211.95 572.50,211.25" fill="none" stroke="#d65050" stroke-width="0.85"/>
<polyline points="575.59,211.25 576.59,211.95 577.59,211.25 578.59,211.95 579.59,211.25 580.59,211.95 581.59,211.25 582.59,211.95 583.59,211.25 584.59,211.95 585.59,211.25 586.59,211.95 587.59,211.25 588.59,211.95 589.59,211.25 590.59,211.95 591.59,211.25 592.59,211.95 593.59,211.25 594.59,211.95 595.59,211.25 596.59,211.95 597.59,211.25 598.59,211.95 599.59,211.25 600.59,211.95 601.59,211.25 602.59,211.95 603.59,211.25 604.59,211.95 605.59,211.25 606.59,211.95 607.59,211.25 608.59,211.95 609.59,211.25 610.59,211.95 611.59,211.25 612.59,211.95" fill="none" stroke="#d65050" stroke-width="0.85"/>
<polyline points="530.80,252.35 531.80,253.05 532.80,252.35 533.80,253.05 534.80,252.35 535.80,253.05 536.80,252.35 537.80,253.05 538.80,252.35 539.80,253.05 540.80,252.35 541.80,253.05 542.80,252.35 543.80,253.05 544.80,252.35 545.80,253.05 546.80,252.35 547.80,253.05 548.80,252.35 549.80,253.05 550.80,252.35 551.80,253.05 552.80,252.35 553.80,253.05 554.80,252.35 555.80,253.05 556.80,252.35 557.80,253.05 558.80,252.35 559.80,253.05 560.80,252.35 561.80,253.05" fill="none" stroke="#d65050" stroke-width="0.85"/>
<polyline points="564.47,252.35 565.47,253.05 566.47,252.35 567.47,253.05 568.47,252.35 569.47,253.05 570.47,252.35 571.47,253.05 572.47,252.35 573.47,253.05 574.47,252.35 575.47,253.05 576.47,252.35 577.47,253.05 578.47,252.35 579.47,253.05 580.47,252.35 581.47,253.05 582.47,252.35 583.47,253.05 584.47,252.35 585.47,253.05 586.47,252.35 587.47,253.05 588.47,252.35 589.47,253.05 590.47,252.35 591.47,253.05 592.47,252.35 593.47,253.05 594.47,252.35 595.47,253.05 596.47,252.35 597.47,253.05 598.47,252.35 599.47,253.05 600.47,252.35 601.47,253.05 602.47,252.35 603.47,253.05" fill="none" stroke="#d65050" stroke-width="0.85"/>
<rect x="524.50" y="267.30" width="58.86" height="0.5" fill="#555"/>
<polyline points="524.50,267.85 525.50,268.55 526.50,267.85 527.50,268.55 528.50,267.85 529.50,268.55 530.50,267.85 531.50,268.55 532.50,267.85 533.50,268.55 534.50,267.85 535.50,268.55 536.50,267.85 537.50,268.55 538.50,267.85 539.50,268.55 540.50,267.85 541.50,268.55 542.50,267.85 543.50,268.55 544.50,267.85 545.50,268.55 546.50,267.85 547.50,268.55 548.50,267.85 549.50,268.55 550.50,267.85 551.50,268.55 552.50,267.85 553.50,268.55 554.50,267.85 555.50,268.55 556.50,267.85 557.50,268.55 558.50,267.85 559.50,268.55 560.50,267.85 561.50,268.55 562.50,267.85 563.50,268.55 564.50,267.85 565.50,268.55 566.50,267.85 567.50,268.55 568.50,267.85 569.50,268.55 570.50,267.85 571.50,268.55 572.50,267.85 573.50,268.55 574.50,267.85 575.50,268.55 576.50,267.85 577.50,268.55 578.50,267.85 579.50,268.55 580.50,267.85 581.50,268.55 582.50,267.85" fill="none" stroke="#d65050" stroke-width="0.85"/>
<polyline points="585.63,267.65 586.63,268.35 587.63,267.65 588.63,268.35 589.63,267.65 590.63,268.35 591.63,267.65 592.63,268.35 593.63,267.65 594.63,268.35 595.63,267.65 596.63,268.35 597.63,267.65 598.63,268.35 599.63,267.65 600.63,268.35 601.63,267.65 602.63,268.35 603.63,267.65 604.63,268.35 605.63,267.65 606.63,268.35 607.63,267.65 608.63,268.35 609.63,267.65 610.63,268.35 611.63,267.65 612.63,268.35 613.63,267.65 614.63,268.35 615.63,267.65 616.63,268.35 617.63,267.65 618.63,268.35 619.63,267.65 620.63,268.35 621.63,267.65 622.63,268.35 623.63,267.65 624.63,268.35 625.63,267.65" fill="none" stroke="#d65050" stroke-width="0.85"/>
<polyline points="628.72,267.65 629.72,268.35 630.72,267.65 631.72,268.35 632.72,267.65 633.72,268.35 634.72,267.65 635.72,268.35 636.72,267.65 637.72,268.35 638.72,267.65 639.72,268.35 640.72,267.65 641.72,268.35 642.72,267.65 643.72,268.35 644.72,267.65 645.72,268.35 646.72,267.65 647.72,268.35 648.72,267.65 649.72,268.35 650.72,267.65 651.72,268.35 652.72,267.65 653.72,268.35 654.72,267.65 655.72,268.35 656.72,267.65 657.72,268.35 658.72,267.65 659.72,268.35 660.72,267.65 661.72,268.35 662.72,267.65 663.72,268.35 664.72,267.65 665.72,268.35 666.72,267.65" fill="none" stroke="#d65050" stroke-width="0.85"/>
<polyline points="705.63,267.65 706.63,268.35 707.63,267.65 708.63,268.35 709.63,267.65 710.63,268.35 711.63,267.65 712.63,268.35 713.63,267.65 714.63,268.35 715.63,267.65 716.63,268.35 717.63,267.65 718.63,268.35 719.63,267.65 720.63,268.35 721.63,267.65 722.63,268.35 723.63,267.65 724.63,268.35 725.63,267.65 726.63,268.35 727.63,267.65 728.63,268.35 729.63,267.65 730.63,268.35 731.63,267.65 732.63,268.35 733.63,267.65 734.63,268.35 735.63,267.65 736.63,268.35 737.63,267.65 738.63,268.35 739.63,267.65 740.63,268.35 741.63,267.65 742.63,268.35 743.63,267.65 744.63,268.35 745.63,267.65 746.63,268.35 747.63,267.65 748.63,268.35 749.63,267.65 750.63,268.35 751.63,267.65 752.63,268.35 753.63,267.65 754.63,268.35 755.63,267.65 756.63,268.35 757.63,267.65 758.63,268.35 759.63,267.65 760.63,268.35 761.63,267.65" fill="none" stroke="#d65050" stroke-width="0.85"/>
<polyline points="524.50,277.85 525.50,278.55 526.50,277.85 527.50,278.55 528.50,277.85 529.50,278.55 530.50,277.85 531.50,278.55 532.50,277.85 533.50,278.55 534.50,277.85 535.50,278.55 536.50,277.85 537.50,278.55 538.50,277.85 539.50,278.55 540.50,277.85 541.50,278.55 542.50,277.85 543.50,278.55 544.50,277.85 545.50,278.55 546.50,277.85 547.50,278.55 548.50,277.85 549.50,278.55 550.50,277.85 551.50,278.55 552.50,277.85 553.50,278.55 554.50,277.85 555.50,278.55 556.50,277.85 557.50,278.55 558.50,277.85 559.50,278.55 560.50,277.85 561.50,278.55 562.50,277.85 563.50,278.55 564.50,277.85 565.50,278.55 566.50,277.85 567.50,278.55" fill="none" stroke="#d65050" stroke-width="0.85"/>
<rect x="524.50" y="293.30" width="80.84" height="0.5" fill="#555"/>
<polyline points="524.50,293.85 525.50,294.55 526.50,293.85 527.50,294.55 528.50,293.85 529.50,294.55 530.50,293.85 531.50,294.55 532.50,293.85 533.50,294.55 534.50,293.85 535.50,294.55 536.50,293.85 537.50,294.55 538.50,293.85 539.50,294.55 540.50,293.85 541.50,294.55 542.50,293.85 543.50,294.55 544.50,293.85 545.50,294.55 546.50,293.85 547.50,294.55 548.50,293.85 549.50,294.55 550.50,293.85 551.50,294.55 552.50,293.85 553.50,294.55 554.50,293.85 555.50,294.55 556.50,293.85 557.50,294.55 558.50,293.85 559.50,294.55 560.50,293.85 561.50,294.55 562.50,293.85 563.50,294.55 564.50,293.85 565.50,294.55 566.50,293.85 567.50,294.55 568.50,293.85 569.50,294.55 570.50,293.85 571.50,294.55 572.50,293.85 573.50,294.55 574.50,293.85 575.50,294.55 576.50,293.85 577.50,294.55 578.50,293.85 579.50,294.55 580.50,293.85 581.50,294.55 582.50,293.85 583.50,294.55 584.50,293.85 585.50,294.55 586.50,293.85 587.50,294.55 588.50,293.85 589.50,294.55 590.50,293.85 591.50,294.55 592.50,293.85 593.50,294.55 594.50,293.85 595.50,294.55 596.50,293.85 597.50,294.55 598.50,293.85 599.50,294.55 600.50,293.85 601.50,294.55 602.50,293.85 603.50,294.55 604.50,293.85" fill="none" stroke="#d65050" stroke-width="0.85"/>
<polyline points="610.12,293.65 611.12,294.35 612.12,293.65 613.12,294.35 614.12,293.65 615.12,294.35 616.12,293.65 617.12,294.35 618.12,293.65 619.12,294.35 620.12,293.65 621.12,294.35 622.12,293.65 623.12,294.35 624.12,293.65 625.12,294.35 626.12,293.65 627.12,294.35 628.12,293.65 629.12,294.35 630.12,293.65 631.12,294.35 632.12,293.65 633.12,294.35 634.12,293.65 635.12,294.35 636.12,293.65 637.12,294.35 638.12,293.65 639.12,294.35 640.12,293.65 641.12,294.35 642.12,293.65 643.12,294.35 644.12,293.65" fill="none" stroke="#d65050" stroke-width="0.85"/>
<polyline points="662.00,293.65 663.00,294.35 664.00,293.65 665.00,294.35 666.00,293.65 667.00,294.35 668.00,293.65 669.00,294.35 670.00,293.65 671.00,294.35 672.00,293.65 673.00,294.35 674.00,293.65 675.00,294.35 676.00,293.65 677.00,294.35 678.00,293.65 679.00,294.35 680.00,293.65 681.00,294.35 682.00,293.65 683.00,294.35 684.00,293.65 685.00,294.35 686.00,293.65 687.00,294.35 688.00,293.65" fill="none" stroke="#d65050" stroke-width="0.85"/>
<polyline points="749.95,293.65 750.95,294.35 751.95,293.65 752.95,294.35 753.95,293.65 754.95,294.35 755.95,293.65 756.95,294.35 757.95,293.65 758.95,294.35 759.95,293.65 760.95,294.35 761.95,293.65 762.95,294.35 763.95,293.65 764.95,294.35 765.95,293.65 766.95,294.35 767.95,293.65 768.95,294.35 769.95,293.65" fill="none" stroke="#d65050" stroke-width="0.85"/>
<rect x="524.50" y="308.50" width="107.90" height="0.5" fill="#555"/>
<polyline points="524.50,309.05 525.50,309.75 526.50,309.05 527.50,309.75 528.50,309.05 529.50,309.75 530.50,309.05 531.50,309.75 532.50,309.05 533.50,309.75 534.50,309.05 535.50,309.75 536.50,309.05 537.50,309.75 538.50,309.05 539.50,309.75 540.50,309.05 541.50,309.75 542.50,309.05 543.50,309.75 544.50,309.05 545.50,309.75 546.50,309.05 547.50,309.75 548.50,309.05 549.50,309.75 550.50,309.05 551.50,309.75 552.50,309.05 553.50,309.75 554.50,309.05 555.50,309.75 556.50,309.05 557.50,309.75 558.50,309.05 559.50,309.75 560.50,309.05 561.50,309.75 562.50,309.05 563.50,309.75 564.50,309.05 565.50,309.75 566.50,309.05 567.50,309.75 568.50,309.05 569.50,309.75 570.50,309.05 571.50,309.75 572.50,309.05 573.50,309.75 574.50,309.05 575.50,309.75 576.50,309.05 577.50,309.75 578.50,309.05 579.50,309.75 580.50,309.05 581.50,309.75 582.50,309.05 583.50,309.75 584.50,309.05 585.50,309.75 586.50,309.05 587.50,309.75 588.50,309.05 589.50,309.75 590.50,309.05 591.50,309.75 592.50,309.05 593.50,309.75 594.50,309.05 595.50,309.75 596.50,309.05 597.50,309.75 598.50,309.05 599.50,309.75 600.50,309.05 601.50,309.75 602.50,309.05 603.50,309.75 604.50,309.05 605.50,309.75 606.50,309.05 607.50,309.75 608.50,309.05 609.50,309.75 610.50,309.05 611.50,309.75 612.50,309.05 613.50,309.75 614.50,309.05 615.50,309.75 616.50,309.05 617.50,309.75 618.50,309.05 619.50,309.75 620.50,309.05 621.50,309.75 622.50,309.05 623.50,309.75 624.50,309.05 625.50,309.75 626.50,309.05 627.50,309.75 628.50,309.05 629.50,309.75 630.50,309.05 631.50,309.75" fill="none" stroke="#d65050" stroke-width="0.85"/>
<polyline points="674.79,308.85 675.79,309.55 676.79,308.85 677.79,309.55 678.79,308.85 679.79,309.55 680.79,308.85 681.79,309.55 682.79,308.85 683.79,309.55 684.79,308.85 685.79,309.55 686.79,308.85 687.79,309.55 688.79,308.85 689.79,309.55 690.79,308.85 691.79,309.55 692.79,308.85 693.79,309.55 694.79,308.85 695.79,309.55 696.79,308.85 697.79,309.55 698.79,308.85 699.79,309.55" fill="none" stroke="#d65050" stroke-width="0.85"/>
<polyline points="702.31,308.85 703.31,309.55 704.31,308.85 705.31,309.55 706.31,308.85 707.31,309.55 708.31,308.85 709.31,309.55 710.31,308.85 711.31,309.55 712.31,308.85 713.31,309.55 714.31,308.85 715.31,309.55 716.31,308.85 717.31,309.55 718.31,308.85 719.31,309.55 720.31,308.85 721.31,309.55 722.31,308.85 723.31,309.55 724.31,308.85 725.31,309.55 726.31,308.85 727.31,309.55 728.31,308.85 729.31,309.55 730.31,308.85 731.31,309.55 732.31,308.85 733.31,309.55 734.31,308.85 735.31,309.55" fill="none" stroke="#d65050" stroke-width="0.85"/>
<rect x="524.50" y="323.90" width="99.99" height="0.5" fill="#555"/>
<polyline points="524.50,324.45 525.50,325.15 526.50,324.45 527.50,325.15 528.50,324.45 529.50,325.15 530.50,324.45 531.50,325.15 532.50,324.45 533.50,325.15 534.50,324.45 535.50,325.15 536.50,324.45 537.50,325.15 538.50,324.45 539.50,325.15 540.50,324.45 541.50,325.15 542.50,324.45 543.50,325.15 544.50,324.45 545.50,325.15 546.50,324.45 547.50,325.15 548.50,324.45 549.50,325.15 550.50,324.45 551.50,325.15 552.50,324.45 553.50,325.15 554.50,324.45 555.50,325.15 556.50,324.45 557.50,325.15 558.50,324.45 559.50,325.15 560.50,324.45 561.50,325.15 562.50,324.45 563.50,325.15 564.50,324.45 565.50,325.15 566.50,324.45 567.50,325.15 568.50,324.45 569.50,325.15 570.50,324.45 571.50,325.15 572.50,324.45 573.50,325.15 574.50,324.45 575.50,325.15 576.50,324.45 577.50,325.15 578.50,324.45 579.50,325.15 580.50,324.45 581.50,325.15 582.50,324.45 583.50,325.15 584.50,324.45 585.50,325.15 586.50,324.45 587.50,325.15 588.50,324.45 589.50,325.15 590.50,324.45 591.50,325.15 592.50,324.45 593.50,325.15 594.50,324.45 595.50,325.15 596.50,324.45 597.50,325.15 598.50,324.45 599.50,325.15 600.50,324.45 601.50,325.15 602.50,324.45 603.50,325.15 604.50,324.45 605.50,325.15 606.50,324.45 607.50,325.15 608.50,324.45 609.50,325.15 610.50,324.45 611.50,325.15 612.50,324.45 613.50,325.15 614.50,324.45 615.50,325.15 616.50,324.45 617.50,325.15 618.50,324.45 619.50,325.15 620.50,324.45 621.50,325.15 622.50,324.45 623.50,325.15" fill="none" stroke="#d65050" stroke-width="0.85"/>
<rect x="524.50" y="339.70" width="106.69" height="0.5" fill="#555"/>
<polyline points="524.50,340.25 525.50,340.95 526.50,340.25 527.50,340.95 528.50,340.25 529.50,340.95 530.50,340.25 531.50,340.95 532.50,340.25 533.50,340.95 534.50,340.25 535.50,340.95 536.50,340.25 537.50,340.95 538.50,340.25 539.50,340.95 540.50,340.25 541.50,340.95 542.50,340.25 543.50,340.95 544.50,340.25 545.50,340.95 546.50,340.25 547.50,340.95 548.50,340.25 549.50,340.95 550.50,340.25 551.50,340.95 552.50,340.25 553.50,340.95 554.50,340.25 555.50,340.95 556.50,340.25 557.50,340.95 558.50,340.25 559.50,340.95 560.50,340.25 561.50,340.95 562.50,340.25 563.50,340.95 564.50,340.25 565.50,340.95 566.50,340.25 567.50,340.95 568.50,340.25 569.50,340.95 570.50,340.25 571.50,340.95 572.50,340.25 573.50,340.95 574.50,340.25 575.50,340.95 576.50,340.25 577.50,340.95 578.50,340.25 579.50,340.95 580.50,340.25 581.50,340.95 582.50,340.25 583.50,340.95 584.50,340.25 585.50,340.95 586.50,340.25 587.50,340.95 588.50,340.25 589.50,340.95 590.50,340.25 591.50,340.95 592.50,340.25 593.50,340.95 594.50,340.25 595.50,340.95 596.50,340.25 597.50,340.95 598.50,340.25 599.50,340.95 600.50,340.25 601.50,340.95 602.50,340.25 603.50,340.95 604.50,340.25 605.50,340.95 606.50,340.25 607.50,340.95 608.50,340.25 609.50,340.95 610.50,340.25 611.50,340.95 612.50,340.25 613.50,340.95 614.50,340.25 615.50,340.95 616.50,340.25 617.50,340.95 618.50,340.25 619.50,340.95 620.50,340.25 621.50,340.95 622.50,340.25 623.50,340.95 624.50,340.25 625.50,340.95 626.50,340.25 627.50,340.95 628.50,340.25 629.50,340.95 630.50,340.25" fill="none" stroke="#d65050" stroke-width="0.85"/>
<polyline points="642.66,340.05 643.66,340.75 644.66,340.05 645.66,340.75 646.66,340.05 647.66,340.75 648.66,340.05 649.66,340.75 650.66,340.05 651.66,340.75 652.66,340.05 653.66,340.75 654.66,340.05 655.66,340.75 656.66,340.05 657.66,340.75 658.66,340.05 659.66,340.75 660.66,340.05 661.66,340.75 662.66,340.05 663.66,340.75" fill="none" stroke="#d65050" stroke-width="0.85"/>
<rect x="524.50" y="355.50" width="100.09" height="0.5" fill="#555"/>
<polyline points="524.50,356.05 525.50,356.75 526.50,356.05 527.50,356.75 528.50,356.05 529.50,356.75 530.50,356.05 531.50,356.75 532.50,356.05 533.50,356.75 534.50,356.05 535.50,356.75 536.50,356.05 537.50,356.75 538.50,356.05 539.50,356.75 540.50,356.05 541.50,356.75 542.50,356.05 543.50,356.75 544.50,356.05 545.50,356.75 546.50,356.05 547.50,356.75 548.50,356.05 549.50,356.75 550.50,356.05 551.50,356.75 552.50,356.05 553.50,356.75 554.50,356.05 555.50,356.75 556.50,356.05 557.50,356.75 558.50,356.05 559.50,356.75 560.50,356.05 561.50,356.75 562.50,356.05 563.50,356.75 564.50,356.05 565.50,356.75 566.50,356.05 567.50,356.75 568.50,356.05 569.50,356.75 570.50,356.05 571.50,356.75 572.50,356.05 573.50,356.75 574.50,356.05 575.50,356.75 576.50,356.05 577.50,356.75 578.50,356.05 579.50,356.75 580.50,356.05 581.50,356.75 582.50,356.05 583.50,356.75 584.50,356.05 585.50,356.75 586.50,356.05 587.50,356.75 588.50,356.05 589.50,356.75 590.50,356.05 591.50,356.75 592.50,356.05 593.50,356.75 594.50,356.05 595.50,356.75 596.50,356.05 597.50,356.75 598.50,356.05 599.50,356.75 600.50,356.05 601.50,356.75 602.50,356.05 603.50,356.75 604.50,356.05 605.50,356.75 606.50,356.05 607.50,356.75 608.50,356.05 609.50,356.75 610.50,356.05 611.50,356.75 612.50,356.05 613.50,356.75 614.50,356.05 615.50,356.75 616.50,356.05 617.50,356.75 618.50,356.05 619.50,356.75 620.50,356.05 621.50,356.75 622.50,356.05 623.50,356.75 624.50,356.05" fill="none" stroke="#d65050" stroke-width="0.85"/>
<polyline points="640.70,355.85 641.70,356.55 642.70,355.85 643.70,356.55 644.70,355.85 645.70,356.55 646.70,355.85 647.70,356.55 648.70,355.85 649.70,356.55 650.70,355.85 651.70,356.55 652.70,355.85 653.70,356.55 654.70,355.85 655.70,356.55" fill="none" stroke="#d65050" stroke-width="0.85"/>
<rect x="524.50" y="370.70" width="113.87" height="0.5" fill="#555"/>
<polyline points="524.50,371.25 525.50,371.95 526.50,371.25 527.50,371.95 528.50,371.25 529.50,371.95 530.50,371.25 531.50,371.95 532.50,371.25 533.50,371.95 534.50,371.25 535.50,371.95 536.50,371.25 537.50,371.95 538.50,371.25 539.50,371.95 540.50,371.25 541.50,371.95 542.50,371.25 543.50,371.95 544.50,371.25 545.50,371.95 546.50,371.25 547.50,371.95 548.50,371.25 549.50,371.95 550.50,371.25 551.50,371.95 552.50,371.25 553.50,371.95 554.50,371.25 555.50,371.95 556.50,371.25 557.50,371.95 558.50,371.25 559.50,371.95 560.50,371.25 561.50,371.95 562.50,371.25 563.50,371.95 564.50,371.25 565.50,371.95 566.50,371.25 567.50,371.95 568.50,371.25 569.50,371.95 570.50,371.25 571.50,371.95 572.50,371.25 573.50,371.95 574.50,371.25 575.50,371.95 576.50,371.25 577.50,371.95 578.50,371.25 579.50,371.95 580.50,371.25 581.50,371.95 582.50,371.25 583.50,371.95 584.50,371.25 585.50,371.95 586.50,371.25 587.50,371.95 588.50,371.25 589.50,371.95 590.50,371.25 591.50,371.95 592.50,371.25 593.50,371.95 594.50,371.25 595.50,371.95 596.50,371.25 597.50,371.95 598.50,371.25 599.50,371.95 600.50,371.25 601.50,371.95 602.50,371.25 603.50,371.95 604.50,371.25 605.50,371.95 606.50,371.25 607.50,371.95 608.50,371.25 609.50,371.95 610.50,371.25 611.50,371.95 612.50,371.25 613.50,371.95 614.50,371.25 615.50,371.95 616.50,371.25 617.50,371.95 618.50,371.25 619.50,371.95 620.50,371.25 621.50,371.95 622.50,371.25 623.50,371.95 624.50,371.25 625.50,371.95 626.50,371.25 627.50,371.95 628.50,371.25 629.50,371.95 630.50,371.25 631.50,371.95 632.50,371.25 633.50,371.95 634.50,371.25 635.50,371.95 636.50,371.25 637.50,371.95" fill="none" stroke="#d65050" stroke-width="0.85"/>
<rect x="524.50" y="386.50" width="174.30" height="0.5" fill="#555"/>
<polyline points="524.50,387.05 525.50,387.75 526.50,387.05 527.50,387.75 528.50,387.05 529.50,387.75 530.50,387.05 531.50,387.75 532.50,387.05 533.50,387.75 534.50,387.05 535.50,387.75 536.50,387.05 537.50,387.75 538.50,387.05 539.50,387.75 540.50,387.05 541.50,387.75 542.50,387.05 543.50,387.75 544.50,387.05 545.50,387.75 546.50,387.05 547.50,387.75 548.50,387.05 549.50,387.75 550.50,387.05 551.50,387.75 552.50,387.05 553.50,387.75 554.50,387.05 555.50,387.75 556.50,387.05 557.50,387.75 558.50,387.05 559.50,387.75 560.50,387.05 561.50,387.75 562.50,387.05 563.50,387.75 564.50,387.05 565.50,387.75 566.50,387.05 567.50,387.75 568.50,387.05 569.50,387.75 570.50,387.05 571.50,387.75 572.50,387.05 573.50,387.75 574.50,387.05 575.50,387.75 576.50,387.05 577.50,387.75 578.50,387.05 579.50,387.75 580.50,387.05 581.50,387.75 582.50,387.05 583.50,387.75 584.50,387.05 585.50,387.75 586.50,387.05 587.50,387.75 588.50,387.05 589.50,387.75 590.50,387.05 591.50,387.75 592.50,387.05 593.50,387.75 594.50,387.05 595.50,387.75 596.50,387.05 597.50,387.75 598.50,387.05 599.50,387.75 600.50,387.05 601.50,387.75 602.50,387.05 603.50,387.75 604.50,387.05 605.50,387.75 606.50,387.05 607.50,387.75 608.50,387.05 609.50,387.75 610.50,387.05 611.50,387.75 612.50,387.05 613.50,387.75 614.50,387.05 615.50,387.75 616.50,387.05 617.50,387.75 618.50,387.05 619.50,387.75 620.50,387.05 621.50,387.75 622.50,387.05 623.50,387.75 624.50,387.05 625.50,387.75 626.50,387.05 627.50,387.75 628.50,387.05 629.50,387.75 630.50,387.05 631.50,387.75 632.50,387.05 633.50,387.75 634.50,387.05 635.50,387.75 636.50,387.05 637.50,387.75 638.50,387.05 639.50,387.75 640.50,387.05 641.50,387.75 642.50,387.05 643.50,387.75 644.50,387.05 645.50,387.75 646.50,387.05 647.50,387.75 648.50,387.05 649.50,387.75 650.50,387.05 651.50,387.75 652.50,387.05 653.50,387.75 654.50,387.05 655.50,387.75 656.50,387.05 657.50,387.75 658.50,387.05 659.50,387.75 660.50,387.05 661.50,387.75 662.50,387.05 663.50,387.75 664.50,387.05 665.50,387.75 666.50,387.05 667.50,387.75 668.50,387.05 669.50,387.75 670.50,387.05 671.50,387.75 672.50,387.05 673.50,387.75 674.50,387.05 675.50,387.75 676.50,387.05 677.50,387.75 678.50,387.05 679.50,387.75 680.50,387.05 681.50,387.75 682.50,387.05 683.50,387.75 684.50,387.05 685.50,387.75 686.50,387.05 687.50,387.75 688.50,387.05 689.50,387.75 690.50,387.05 691.50,387.75 692.50,387.05 693.50,387.75 694.50,387.05 695.50,387.75 696.50,387.05 697.50,387.75 698.50,387.05" fill="none" stroke="#d65050" stroke-width="0.85"/>
<rect x="524.50" y="402.20" width="184.48" height="0.5" fill="#555"/>
<polyline points="524.50,402.75 525.50,403.45 526.50,402.75 527.50,403.45 528.50,402.75 529.50,403.45 530.50,402.75 531.50,403.45 532.50,402.75 533.50,403.45 534.50,402.75 535.50,403.45 536.50,402.75 537.50,403.45 538.50,402.75 539.50,403.45 540.50,402.75 541.50,403.45 542.50,402.75 543.50,403.45 544.50,402.75 545.50,403.45 546.50,402.75 547.50,403.45 548.50,402.75 549.50,403.45 550.50,402.75 551.50,403.45 552.50,402.75 553.50,403.45 554.50,402.75 555.50,403.45 556.50,402.75 557.50,403.45 558.50,402.75 559.50,403.45 560.50,402.75 561.50,403.45 562.50,402.75 563.50,403.45 564.50,402.75 565.50,403.45 566.50,402.75 567.50,403.45 568.50,402.75 569.50,403.45 570.50,402.75 571.50,403.45 572.50,402.75 573.50,403.45 574.50,402.75 575.50,403.45 576.50,402.75 577.50,403.45 578.50,402.75 579.50,403.45 580.50,402.75 581.50,403.45 582.50,402.75 583.50,403.45 584.50,402.75 585.50,403.45 586.50,402.75 587.50,403.45 588.50,402.75 589.50,403.45 590.50,402.75 591.50,403.45 592.50,402.75 593.50,403.45 594.50,402.75 595.50,403.45 596.50,402.75 597.50,403.45 598.50,402.75 599.50,403.45 600.50,402.75 601.50,403.45 602.50,402.75 603.50,403.45 604.50,402.75 605.50,403.45 606.50,402.75 607.50,403.45 608.50,402.75 609.50,403.45 610.50,402.75 611.50,403.45 612.50,402.75 613.50,403.45 614.50,402.75 615.50,403.45 616.50,402.75 617.50,403.45 618.50,402.75 619.50,403.45 620.50,402.75 621.50,403.45 622.50,402.75 623.50,403.45 624.50,402.75 625.50,403.45 626.50,402.75 627.50,403.45 628.50,402.75 629.50,403.45 630.50,402.75 631.50,403.45 632.50,402.75 633.50,403.45 634.50,402.75 635.50,403.45 636.50,402.75 637.50,403.45 638.50,402.75 639.50,403.45 640.50,402.75 641.50,403.45 642.50,402.75 643.50,403.45 644.50,402.75 645.50,403.45 646.50,402.75 647.50,403.45 648.50,402.75 649.50,403.45 650.50,402.75 651.50,403.45 652.50,402.75 653.50,403.45 654.50,402.75 655.50,403.45 656.50,402.75 657.50,403.45 658.50,402.75 659.50,403.45 660.50,402.75 661.50,403.45 662.50,402.75 663.50,403.45 664.50,402.75 665.50,403.45 666.50,402.75 667.50,403.45 668.50,402.75 669.50,403.45 670.50,402.75 671.50,403.45 672.50,402.75 673.50,403.45 674.50,402.75 675.50,403.45 676.50,402.75 677.50,403.45 678.50,402.75 679.50,403.45 680.50,402.75 681.50,403.45 682.50,402.75 683.50,403.45 684.50,402.75 685.50,403.45 686.50,402.75 687.50,403.45 688.50,402.75 689.50,403.45 690.50,402.75 691.50,403.45 692.50,402.75 693.50,403.45 694.50,402.75 695.50,403.45 696.50,402.75 697.50,403.45 698.50,402.75 699.50,403.45 700.50,402.75 701.50,403.45 702.50,402.75 703.50,403.45 704.50,402.75 705.50,403.45 706.50,402.75 707.50,403.45 708.50,402.75" fill="none" stroke="#d65050" stroke-width="0.85"/>
<rect x="524.50" y="417.00" width="64.24" height="0.5" fill="#555"/>
<polyline points="524.50,417.55 525.50,418.25 526.50,417.55 527.50,418.25 528.50,417.55 529.50,418.25 530.50,417.55 531.50,418.25 532.50,417.55 533.50,418.25 534.50,417.55 535.50,418.25 536.50,417.55 537.50,418.25 538.50,417.55 539.50,418.25 540.50,417.55 541.50,418.25 542.50,417.55 543.50,418.25 544.50,417.55 545.50,418.25 546.50,417.55 547.50,418.25 548.50,417.55 549.50,418.25 550.50,417.55 551.50,418.25 552.50,417.55 553.50,418.25 554.50,417.55 555.50,418.25 556.50,417.55 557.50,418.25 558.50,417.55 559.50,418.25 560.50,417.55 561.50,418.25 562.50,417.55 563.50,418.25 564.50,417.55 565.50,418.25 566.50,417.55 567.50,418.25 568.50,417.55 569.50,418.25 570.50,417.55 571.50,418.25 572.50,417.55 573.50,418.25 574.50,417.55 575.50,418.25 576.50,417.55 577.50,418.25 578.50,417.55 579.50,418.25 580.50,417.55 581.50,418.25 582.50,417.55 583.50,418.25 584.50,417.55 585.50,418.25 586.50,417.55 587.50,418.25 588.50,417.55" fill="none" stroke="#d65050" stroke-width="0.85"/>
<rect x="925.20" y="157.60" width="7.50" height="8.00" fill="#ffffff" stroke="#c8c8c8" stroke-width="0.6"/>
<path d="M927.6,162.4 L930.3,162.4 L928.95,160.8 Z" fill="#505050"/>
<rect x="925.20" y="167.40" width="7.50" height="234.80" fill="#ffffff" stroke="#c8c8c8" stroke-width="0.7"/>
<rect x="925.80" y="519.00" width="6.60" height="7.10" fill="#ffffff" stroke="#c8c8c8" stroke-width="0.6"/>
<path d="M927.6,521.8 L930.3,521.8 L928.95,523.4 Z" fill="#505050"/>
<path d="M184.8,531 L188.2,531 L188.2,537 L184.8,537 Z M188.2,531 L191.8,531 L191.8,537 L188.2,537" fill="none" stroke="#707070" stroke-width="0.7"/><path d="M189.4,532.6 L190.8,534.4 M190.8,532.6 L189.4,534.4" stroke="#707070" stroke-width="0.5"/>
<path d="M784.8,531 L788.6,531.6 L788.6,537 L784.8,536.4 Z M788.6,531.6 L792.6,531 L792.6,536.4 L788.6,537 Z" fill="#c8c8c8" stroke="#8a8a8a" stroke-width="0.6"/>
<rect x="800.30" y="528.60" width="19.50" height="10.90" fill="#d0d0d0" />
<rect x="805.80" y="530.80" width="7.80" height="6.20" fill="#a8a8a8" stroke="#8a8a8a" stroke-width="0.5"/>
<rect x="826.20" y="530.80" width="6.60" height="5.80" fill="#f0f0f0" stroke="#8a8a8a" stroke-width="0.6"/>
<circle cx="833" cy="536" r="1.7" fill="#f0f0f0" stroke="#707070" stroke-width="0.6"/>
<rect x="843.3" y="533.4" width="3.2" height="0.7" fill="#505050"/><rect x="848.8" y="533.5" width="54.6" height="0.5" fill="#b8b8b8"/><rect x="872.2" y="530.6" width="1.8" height="6.2" fill="#505050"/>
<rect x="905" y="533.4" width="4.4" height="0.8" fill="#505050"/><rect x="906.8" y="531.6" width="0.8" height="4.4" fill="#505050"/>
<g fill="#ffffff"><path d="M77,547.2 L81.2,546.6 L81.2,550.4 L77,550.4 Z"/><path d="M81.8,546.5 L86.2,545.9 L86.2,550.4 L81.8,550.4 Z"/><path d="M77,551 L81.2,551 L81.2,554.8 L77,554.2 Z"/><path d="M81.8,551 L86.2,551 L86.2,555.4 L81.8,554.8 Z"/></g>
<rect x="103.4" y="546.2" width="11.8" height="9" fill="#f5c94a"/><rect x="103.4" y="546.2" width="5" height="1.6" fill="#e0a830"/><rect x="106" y="551.6" width="6.6" height="3.6" fill="#3fa8c8"/><rect x="107.6" y="553" width="3.4" height="2.2" fill="#f5c94a"/>
<rect x="98.50" y="559.80" width="21.50" height="1.00" fill="#8ec3ea" />
<path d="M131,547.6 L137.8,545.6 L140.4,546.8 L140.4,555 L137.8,556.4 L131,554.2 Z" fill="#d9441c"/><path d="M133.6,548.4 L137,547.6 L137,554.4 L133.6,553.6 Z" fill="#1f2d33"/>
<circle cx="162.4" cy="550.9" r="6" fill="#db4437"/><path d="M162.4,550.9 L156.9,548.5 A6,6 0 0 0 159.4,556.1 Z" fill="#0f9d58"/><path d="M162.4,550.9 L159.4,556.1 A6,6 0 0 0 168.3,549.9 Z" fill="#f4c20d"/><circle cx="162.4" cy="550.9" r="2.6" fill="#ffffff"/><circle cx="162.4" cy="550.9" r="1.9" fill="#4285f4"/>
<circle cx="188.6" cy="550.9" r="6.8" fill="#1e7ed8"/><path d="M182.5,548.6 Q185,544 189.5,544.1 Q195,544.5 195.4,550 Q195.4,553 192,553.4 Q188.6,553.6 188.6,551 Q188.6,548 185.6,547.8 Q183.6,547.8 182.5,548.6 Z" fill="#3ec36b"/><path d="M184.6,551 Q185,555 189.6,556 Q186.4,557.6 183.4,555 Q182,553 184.6,551 Z" fill="#0d5ca8"/>
<rect x="202.20" y="540.00" width="25.80" height="21.00" fill="#b86a26" />
<circle cx="215.4" cy="550.8" r="6.2" fill="#36a3d9"/><path d="M211.6,550.8 L219.2,547.8 L217.8,554.4 L215.4,552.6 L214.4,553.8 L214.2,551.8 Z" fill="#ffffff"/>
<rect x="214" y="552.6" width="8.7" height="5.9" rx="2.5" fill="#e8322e"/>
<text x="215.20" y="557.40" font-size="5.00" fill="#ffffff" font-family="Liberation Sans" font-weight="bold" textLength="6.40" lengthAdjust="spacingAndGlyphs">55</text>
<rect x="240.6" y="546.6" width="7.4" height="9" fill="#ffffff"/><rect x="242.6" y="548.6" width="4" height="0.8" fill="#d24726"/><rect x="242.6" y="550.6" width="4" height="0.8" fill="#d24726"/><rect x="242.6" y="552.6" width="4" height="0.8" fill="#d24726"/>
<path d="M235.6,546.4 L242.6,545.6 L242.6,556.2 L235.6,555.2 Z" fill="#d24726"/>
<text x="236.80" y="553.20" font-size="6.50" fill="#ffffff" font-family="Liberation Sans" font-weight="bold" textLength="3.80" lengthAdjust="spacingAndGlyphs">P</text>
<rect x="231.00" y="559.80" width="22.20" height="1.00" fill="#8ec3ea" />
<rect x="255.30" y="540.00" width="24.30" height="21.00" fill="#4a5964" />
<rect x="267.6" y="546.6" width="6.2" height="9" fill="#ffffff"/><rect x="269.2" y="548.6" width="3.2" height="0.8" fill="#2b579a"/><rect x="269.2" y="550.6" width="3.2" height="0.8" fill="#2b579a"/><rect x="269.2" y="552.6" width="3.2" height="0.8" fill="#2b579a"/>
<path d="M262.6,546.4 L269.2,545.6 L269.2,556.2 L262.6,555.2 Z" fill="#2b579a"/>
<text x="263.00" y="553.20" font-size="5.80" fill="#ffffff" font-family="Liberation Sans" font-weight="bold" textLength="5.60" lengthAdjust="spacingAndGlyphs">W</text>
<rect x="255.30" y="559.80" width="24.30" height="1.00" fill="#8ec3ea" />
<defs><radialGradient id="sun" cx="0.4" cy="0.35" r="0.7"><stop offset="0" stop-color="#ffe38a"/><stop offset="0.6" stop-color="#f7c42c"/><stop offset="1" stop-color="#e89a10"/></radialGradient></defs><circle cx="740.3" cy="550.9" r="5.6" fill="url(#sun)"/>
<path d="M801.2,553 L804.6,549.4 L808,553" fill="none" stroke="#e8e8e8" stroke-width="1"/>
<path d="M813,553.8 L822.3,553.8 Q822.6,550.8 820,550.6 Q819,548 816.4,548.6 Q814.6,549.4 814.8,551 Q812.8,551.4 813,553.8 Z" fill="#e8e8e8"/>
<path d="M827,554.4 L834.6,554.4 L834.6,546.8 Z" fill="none" stroke="#9aa0a8" stroke-width="0.8"/><path d="M830,554.4 L834.6,549.8 L834.6,554.4 Z" fill="#c8ccd0"/>
<path d="M838.6,549.6 L840.6,549.6 L843,547.4 L843,554.4 L840.6,552.2 L838.6,552.2 Z" fill="#e8e8e8"/><path d="M844.4,548.8 Q845.6,550.9 844.4,553 M846,547.8 Q847.8,550.9 846,554" fill="none" stroke="#e8e8e8" stroke-width="0.8"/>
<path d="M911.6,546.4 L920,546.4 L920,553.2 L917,553.2 L915.8,554.8 L914.6,553.2 L911.6,553.2 Z" fill="none" stroke="#e8e8e8" stroke-width="0.9"/>
<rect x="931.60" y="540.00" width="1.40" height="21.00" fill="#3a4656" />
</svg></body></html>
